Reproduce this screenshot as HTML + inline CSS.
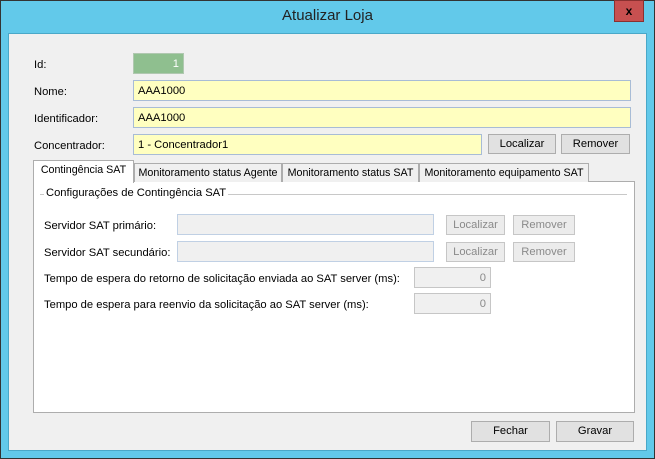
<!DOCTYPE html><html><head><style>
*{box-sizing:border-box;margin:0;padding:0}
body{width:655px;height:459px;position:relative;background:#62c9ea;font-family:"Liberation Sans",sans-serif;font-size:11.2px;color:#000;overflow:hidden}
div{white-space:nowrap}
.a{position:absolute}
.frame{position:absolute;left:0;top:0;width:655px;height:459px;border:1px solid #333}
.client{position:absolute;left:8px;top:33px;width:639px;height:418px;background:#f0f0f0;border:1px solid #4aa8c8}
.box{position:absolute;border:1px solid #a8bcd6;height:21px;padding:3px 4px 0;line-height:15px}
.btn{position:absolute;border:1px solid #adadad;background:#e1e1e1;height:20px;text-align:center;padding-top:2px;line-height:15px}
.dis{color:#8a8a8a;border-color:#c6c6c6;background:#ececec}
.tab{position:absolute;top:163px;height:19px;border:1px solid #adadad;border-bottom:none;background:#f0f0f0;text-align:center;padding-top:2px;line-height:15px;font-size:10.7px;overflow:hidden}
</style></head><body>
<div class="frame"></div>
<div class="a" style="left:0;width:655px;top:7px;text-align:center;font-size:15px;color:#222">Atualizar Loja</div>
<div class="a" style="left:614px;top:0;width:30px;height:22px;background:#c75050;border:1px solid #8a3030;color:#000;font-weight:bold;text-align:center;line-height:20px;font-size:12px">x</div>
<div class="client"></div>
<div class="a" style="left:34px;top:59px">Id:</div>
<div class="box" style="left:133px;top:53px;width:51px;background:#8fbf8f;border-color:#b0c8b0;color:#fff;text-align:right">1</div>
<div class="a" style="left:34px;top:86px">Nome:</div>
<div class="box" style="left:133px;top:80px;width:498px;background:#ffffc0">AAA1000</div>
<div class="a" style="left:34px;top:113px">Identificador:</div>
<div class="box" style="left:133px;top:107px;width:498px;background:#ffffc0">AAA1000</div>
<div class="a" style="left:34px;top:140px">Concentrador:</div>
<div class="box" style="left:133px;top:134px;width:349px;background:#ffffc0">1 - Concentrador1</div>
<div class="btn" style="left:488px;top:134px;width:68px">Localizar</div>
<div class="btn" style="left:561px;top:134px;width:69px">Remover</div>
<div class="a" style="left:33px;top:181px;width:602px;height:232px;background:#fff;border:1px solid #adadad"></div>
<div class="tab" style="left:134px;width:148px">Monitoramento status Agente</div>
<div class="tab" style="left:282px;width:137px">Monitoramento status SAT</div>
<div class="tab" style="left:419px;width:170px">Monitoramento equipamento SAT</div>
<div class="tab" style="left:33px;top:160px;height:23px;width:101px;background:#fff">Contingência SAT</div>
<div class="a" style="left:40px;top:194px;width:587px;border-top:1px solid #c8c8c8"></div>
<div class="a" style="left:44px;top:187px;background:#fff;padding:0 2px">Configurações de Contingência SAT</div>
<div class="a" style="left:44px;top:220px">Servidor SAT primário:</div>
<div class="box" style="left:177px;top:214px;width:257px;background:#f0f0f0;border-color:#c0d0e4"></div>
<div class="btn dis" style="left:446px;top:215px;width:59px">Localizar</div>
<div class="btn dis" style="left:513px;top:215px;width:62px">Remover</div>
<div class="a" style="left:44px;top:247px">Servidor SAT secundário:</div>
<div class="box" style="left:177px;top:241px;width:257px;background:#f0f0f0;border-color:#c0d0e4"></div>
<div class="btn dis" style="left:446px;top:242px;width:59px">Localizar</div>
<div class="btn dis" style="left:513px;top:242px;width:62px">Remover</div>
<div class="a" style="left:44px;top:273px">Tempo de espera do retorno de solicitação enviada ao SAT server (ms):</div>
<div class="box" style="left:414px;top:267px;width:77px;background:#f0f0f0;border-color:#c6c6c6;color:#8a8a8a;text-align:right">0</div>
<div class="a" style="left:44px;top:299px">Tempo de espera para reenvio da solicitação ao SAT server (ms):</div>
<div class="box" style="left:414px;top:293px;width:77px;background:#f0f0f0;border-color:#c6c6c6;color:#8a8a8a;text-align:right">0</div>
<div class="btn" style="left:471px;top:421px;width:79px;height:21px">Fechar</div>
<div class="btn" style="left:556px;top:421px;width:78px;height:21px">Gravar</div>
</body></html>
